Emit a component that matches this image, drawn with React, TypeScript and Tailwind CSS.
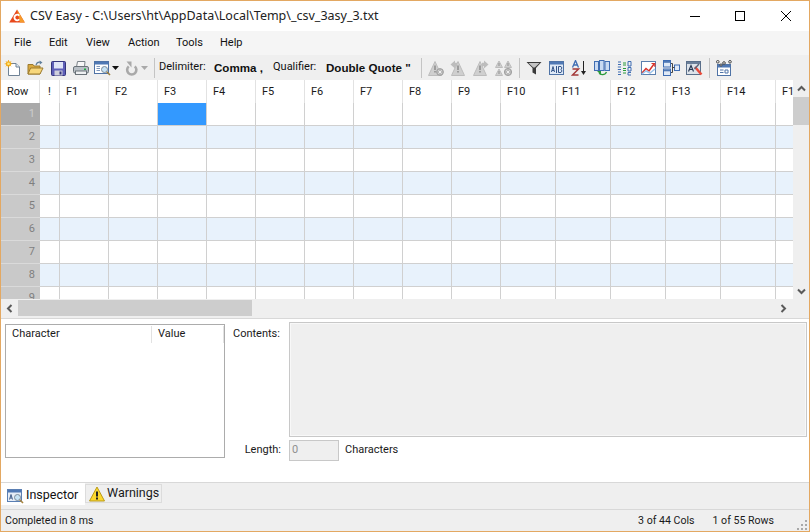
const fieldCols = [
  { name: "F1", w: "w-[49px]" },
  { name: "F2", w: "w-[49px]" },
  { name: "F3", w: "w-[49px]" },
  { name: "F4", w: "w-[49px]" },
  { name: "F5", w: "w-[49px]" },
  { name: "F6", w: "w-[49px]" },
  { name: "F7", w: "w-[49px]" },
  { name: "F8", w: "w-[49px]" },
  { name: "F9", w: "w-[49px]" },
  { name: "F10", w: "w-[55px]" },
  { name: "F11", w: "w-[55px]" },
  { name: "F12", w: "w-[55px]" },
  { name: "F13", w: "w-[55px]" },
  { name: "F14", w: "w-[55px]" },
  { name: "F15", w: "w-[55px]" },
];

const rows = [1, 2, 3, 4, 5, 6, 7, 8, 9];

function Icon({ children, w = 16 }: { children: React.ReactNode; w?: number }) {
  return (
    <svg width={w} height="16" viewBox={`0 0 ${w} 16`} className="shrink-0 block">
      {children}
    </svg>
  );
}

function Logo() {
  return (
    <svg width="16" height="14" viewBox="0 0 16 14" className="block shrink-0">
      <path d="M8 0.5 L15.8 13.5 H0.2 Z" fill="#e8481c" />
      <path d="M8 0.5 L15.8 13.5 H11 Z" fill="#f59a2a" />
      <path d="M10.3 6.6 A2.8 2.8 0 1 0 10.3 10.4" fill="none" stroke="#fff" strokeWidth="1.8" />
    </svg>
  );
}

function NewIcon() {
  return (
    <Icon w={17}>
      <path d="M4.5 3.5 H12 L15.5 7 V15.5 H4.5 Z" fill="#fff" stroke="#6f8296" />
      <path d="M12 3.5 V7 H15.5" fill="#dfe8f0" stroke="#6f8296" />
      <circle cx="4.5" cy="3.8" r="2.6" fill="#f7b81f" />
      <path d="M4.5 0 V7.6 M0.7 3.8 H8.3 M2 1.3 L7 6.3 M7 1.3 L2 6.3" stroke="#f0a010" strokeWidth="0.8" />
      <circle cx="4.5" cy="3.8" r="1.3" fill="#fdeb8a" />
    </Icon>
  );
}

function OpenIcon() {
  return (
    <Icon w={17}>
      <path d="M1 4.5 H6 L7 6 H13 V14 H1 Z" fill="#d9a93f" stroke="#9b7a2e" />
      <path d="M1 14 L3.6 8 H16 L13 14 Z" fill="#f7d77c" stroke="#9b7a2e" />
      <path d="M9 5 C9.6 2.6 11.5 1.8 13.5 2.2" fill="none" stroke="#5f7f9c" strokeWidth="1.1" />
      <path d="M12.6 0.6 L15.5 2.4 L12.8 4.4 Z" fill="#5f7f9c" />
    </Icon>
  );
}

function SaveIcon() {
  return (
    <Icon w={15}>
      <rect x="0.5" y="1.5" width="14" height="14" rx="1" fill="#5e5fb8" stroke="#34357c" />
      <rect x="3" y="2" width="9" height="6.5" fill="#dfe4f7" />
      <rect x="3.5" y="10.5" width="8" height="5" fill="#cfd0dc" />
      <rect x="8.5" y="11.5" width="2" height="3" fill="#34357c" />
    </Icon>
  );
}

function PrintIcon() {
  return (
    <Icon w={16}>
      <path d="M4.5 1.5 H12 L11.5 7 H3.5 Z" fill="#f7f7f7" stroke="#7a8288" />
      <rect x="0.5" y="6.5" width="15" height="6.5" rx="1.5" fill="#b9c0c6" stroke="#6a7278" />
      <rect x="2.5" y="11" width="11" height="3.5" fill="#eef0f2" stroke="#6a7278" />
      <rect x="11" y="8.5" width="2" height="1.5" fill="#1fae3f" />
    </Icon>
  );
}

function ViewIcon() {
  return (
    <Icon w={17}>
      <rect x="0.5" y="1.5" width="14" height="12" fill="#fff" stroke="#4f73a6" />
      <rect x="1" y="2" width="13" height="2.5" fill="#4f78b4" />
      <path d="M2.5 6.5 H6 M2.5 8.5 H6 M2.5 10.5 H6" stroke="#7d96bb" />
      <circle cx="10.5" cy="9.5" r="3" fill="#c7e3f5" stroke="#7d8b98" />
      <path d="M12.7 11.7 L16 15" stroke="#9a7d3e" strokeWidth="1.6" />
    </Icon>
  );
}

function Caret({ color }: { color: string }) {
  return (
    <svg width="7" height="4" viewBox="0 0 7 4" className="block shrink-0" fill={color}>
      <path d="M0 0 H7 L3.5 4 Z" />
    </svg>
  );
}

function UndoIcon() {
  return (
    <Icon w={13}>
      <path d="M4.5 5.4 A4.6 4.6 0 1 0 10.6 5.4" fill="none" stroke="#a9a9a9" strokeWidth="2.6" transform="translate(-0.8 1)" />
      <path d="M1.5 1.5 H6.5 V7.5 Z" fill="#a9a9a9" />
    </Icon>
  );
}

function GrayTriangle({ x = 0, y = 1, w = 13, h = 14 }: { x?: number; y?: number; w?: number; h?: number }) {
  return <path d={`M${x + w / 2} ${y} L${x + w} ${y + h} H${x} Z`} fill="#cfcfcf" stroke="#bcbcbc" strokeLinejoin="round" />;
}

function WarnClearIcon() {
  return (
    <Icon>
      <GrayTriangle x={0.5} y={1.5} />
      <path d="M7 5.5 V10 M7 11 V12.5" stroke="#8f8f8f" strokeWidth="1.6" />
      <circle cx="12" cy="12" r="3.4" fill="#b9b9b9" stroke="#a0a0a0" />
      <path d="M10.5 10.5 L13.5 13.5 M13.5 10.5 L10.5 13.5" stroke="#eee" />
    </Icon>
  );
}

function WarnPrevIcon() {
  return (
    <Icon>
      <GrayTriangle x={1.5} y={1.5} />
      <path d="M8 5.5 V10 M8 11 V12.5" stroke="#8f8f8f" strokeWidth="1.6" />
      <path d="M0.5 4.5 L5 0.5 V2.8 H7 V6.2 H5 V8.5 Z" fill="#bdbdbd" />
    </Icon>
  );
}

function WarnNextIcon() {
  return (
    <Icon>
      <GrayTriangle x={0.5} y={1.5} />
      <path d="M7 5.5 V10 M7 11 V12.5" stroke="#8f8f8f" strokeWidth="1.6" />
      <path d="M15.5 4.5 L11 0.5 V2.8 H9 V6.2 H11 V8.5 Z" fill="#bdbdbd" />
    </Icon>
  );
}

function WarnAllIcon() {
  return (
    <Icon w={18}>
      <GrayTriangle x={0.5} y={1} w={7} h={6.5} />
      <GrayTriangle x={9.5} y={1} w={7} h={6.5} />
      <GrayTriangle x={0.5} y={9} w={7} h={6.5} />
      <path d="M4 3 V6 M13 3 V6 M4 11 V14" stroke="#8f8f8f" />
      <circle cx="13" cy="12" r="3.6" fill="#b9b9b9" stroke="#a0a0a0" />
      <path d="M11.5 10.5 L14.5 13.5 M14.5 10.5 L11.5 13.5" stroke="#eee" />
    </Icon>
  );
}

function FilterIcon() {
  return (
    <Icon>
      <path d="M0.5 2 H15.5 L10 8 V14.5 L6.5 12.5 V8 Z" fill="#3a3a3a" />
      <path d="M2.5 3 H13.5 L8.8 7.5 H7.2 Z" fill="#c4c4c4" />
    </Icon>
  );
}

function RenameIcon() {
  return (
    <Icon w={15}>
      <rect x="0.5" y="1.5" width="14" height="13" fill="#dfe9f6" stroke="#4f73a6" />
      <rect x="1" y="2" width="13" height="2.5" fill="#4f78b4" />
      <path d="M2.5 12 L4 6.5 L5.5 12 M3 10.5 H5" fill="none" stroke="#34558a" />
      <path d="M7.5 6 V13" stroke="#34558a" />
      <path d="M9.5 6.5 H12 L13 8 L12 9.3 L13 11 L12 12.5 H9.5 Z" fill="none" stroke="#34558a" />
    </Icon>
  );
}

function SortIcon() {
  return (
    <Icon>
      <path d="M1.5 7.5 L4.5 0.5 L7.5 7.5 M2.8 5 H6.2" fill="none" stroke="#3f6db3" strokeWidth="1.3" />
      <path d="M1.5 9 H7.5 L1.5 15 H7.5" fill="none" stroke="#a33a3a" strokeWidth="1.5" />
      <path d="M12.5 1 V12" stroke="#222" />
      <path d="M10 11 H15 L12.5 15 Z" fill="#222" />
    </Icon>
  );
}

function ColumnsIcon() {
  return (
    <Icon>
      <rect x="0.5" y="1.5" width="4" height="9" fill="#c9daf2" stroke="#3f6db3" />
      <rect x="5.5" y="0.5" width="4.5" height="10" fill="#c9daf2" stroke="#3f6db3" />
      <rect x="11" y="1.5" width="4.5" height="9" fill="#c9daf2" stroke="#3f6db3" />
      <path d="M5 12.5 C6 15.5 11 15.5 12.5 12" fill="none" stroke="#2a9a3a" strokeWidth="1.3" />
      <path d="M3 11 H7 V14.5 Z" fill="#2a9a3a" />
    </Icon>
  );
}

function NumberIcon() {
  return (
    <Icon w={15}>
      <path d="M1 2 H4 M1 4.5 H4 M0.8 7 H4 M0.8 9.5 H4 M1 12 H4 M1 14.5 H4" stroke="#3f6db3" />
      <path d="M6 3 H9 M6 5 H9 M6 8.5 H9 M6 10.5 H9 M6 13 H9" stroke="#2a9a3a" />
      <path d="M11 1.5 H14 V6 H11 Z M11 7.5 H14 V11 H11 Z M14 12.5 H11 V15 H14" fill="none" stroke="#3f6db3" />
    </Icon>
  );
}

function ChartIcon() {
  return (
    <Icon w={15}>
      <rect x="0.5" y="1.5" width="14" height="13" fill="#fff" stroke="#5b7fae" />
      <path d="M1 13 L5 8.5 L8 11 L13 4" fill="none" stroke="#d9342b" strokeWidth="1.5" />
      <path d="M10.5 3.5 H13.8 V6.8" fill="none" stroke="#d9342b" strokeWidth="1.2" />
      <path d="M1 14 L5 11 L9 13 L14 9" fill="none" stroke="#9cc3ea" strokeWidth="1.5" />
    </Icon>
  );
}

function SplitIcon() {
  return (
    <Icon w={17}>
      <rect x="0.5" y="0.5" width="7" height="6.5" fill="#dfe9f6" stroke="#3f6db3" />
      <rect x="1" y="1" width="6" height="1.8" fill="#4f78b4" />
      <rect x="0.5" y="9" width="7" height="6.5" fill="#dfe9f6" stroke="#3f6db3" />
      <rect x="1" y="9.5" width="6" height="1.8" fill="#4f78b4" />
      <rect x="11.5" y="5" width="5" height="5.5" fill="#dfe9f6" stroke="#3f6db3" />
      <path d="M8 3.5 H9.5 V12.5 H8 M9.5 7.5 H11.5" fill="none" stroke="#444" />
    </Icon>
  );
}

function ClearIcon() {
  return (
    <Icon w={17}>
      <rect x="0.5" y="1.5" width="14" height="13" fill="#dde3ea" stroke="#5a6f8a" />
      <rect x="1" y="2" width="13" height="2" fill="#6b7f99" />
      <path d="M2.5 11.5 L5 5.5 L7.5 11.5 M3.5 9.5 H6.5" fill="none" stroke="#2a3a55" strokeWidth="1.2" />
      <path d="M9 7 L15.5 14.5" stroke="#ea4a3a" strokeWidth="2.4" />
      <path d="M13 4 L8.5 9" stroke="#59667a" strokeWidth="1.4" />
    </Icon>
  );
}

function SettingsIcon() {
  return (
    <Icon>
      <rect x="1.5" y="4.5" width="13" height="11" fill="#fff" stroke="#4f73a6" />
      <rect x="2" y="5" width="12" height="2.5" fill="#4f78b4" />
      <circle cx="1.8" cy="1.8" r="1.3" fill="#fff" stroke="#444" />
      <circle cx="8" cy="3" r="1.3" fill="#fff" stroke="#444" />
      <circle cx="14" cy="1.8" r="1.3" fill="#fff" stroke="#444" />
      <circle cx="5" cy="5" r="1.1" fill="#fff" stroke="#444" />
      <path d="M4 10 H7.5 M4 12.5 H7.5 M9 10 H12 V13 H9 Z" stroke="#4f73a6" fill="none" />
    </Icon>
  );
}

function InspectorIcon() {
  return (
    <Icon w={17}>
      <rect x="0.5" y="1.5" width="14" height="12" fill="#e6edf7" stroke="#5a7fb3" />
      <rect x="1" y="2" width="13" height="2.5" fill="#4f78b4" />
      <path d="M2.5 11.5 L4 6.5 L5.5 11.5 M3 10 H5" fill="none" stroke="#445f8a" />
      <circle cx="10.5" cy="9.5" r="3" fill="#c7e3f5" stroke="#7d8b98" />
      <path d="M12.7 11.7 L16 15" stroke="#a8843e" strokeWidth="1.6" />
    </Icon>
  );
}

function WarningIcon() {
  return (
    <Icon>
      <path d="M8 1 L15.5 15 H0.5 Z" fill="#fcd82e" stroke="#b99a1a" strokeLinejoin="round" />
      <path d="M8 5.5 V10.5 M8 11.5 V13.5" stroke="#222" strokeWidth="2" />
    </Icon>
  );
}

function Sep({ className }: { className: string }) {
  return <div className={`h-[20px] w-[1px] shrink-0 bg-[#c4c4c4] ${className}`} />;
}

function TitleBar() {
  return (
    <div className="flex h-[30px] shrink-0 items-center bg-white">
      <div className="ml-[8px] mr-[5px]">
        <Logo />
      </div>
      <span className="font-['Noto_Sans'] text-[12.5px] text-[#222]">
        CSV Easy - C:\Users\ht\AppData\Local\Temp\_csv_3asy_3.txt
      </span>
      <div className="ml-auto flex h-full">
        <div className="flex w-[44px] items-center justify-center">
          <div className="h-[1px] w-[10px] bg-black" />
        </div>
        <div className="flex w-[46px] items-center justify-center">
          <div className="h-[10px] w-[10px] border border-black" />
        </div>
        <div className="flex w-[46px] items-center justify-center">
          <svg width="10" height="10" viewBox="0 0 10 10" className="block">
            <path d="M0 0 L10 10 M10 0 L0 10" stroke="#000" strokeWidth="1" />
          </svg>
        </div>
      </div>
    </div>
  );
}

function MenuBar() {
  return (
    <div className="flex h-[24px] shrink-0 items-center bg-[#f5f5f5] pl-[13px] pt-[1px] text-[#111]">
      <span className="w-[35px]">File</span>
      <span className="w-[37px]">Edit</span>
      <span className="w-[42px]">View</span>
      <span className="w-[48px]">Action</span>
      <span className="w-[44px]">Tools</span>
      <span>Help</span>
    </div>
  );
}

function ToolBar() {
  return (
    <div className="flex h-[25px] shrink-0 items-center bg-[#efefef] pl-[3px] text-[#111]">
      <NewIcon />
      <div className="ml-[6px]"><OpenIcon /></div>
      <div className="ml-[7px]"><SaveIcon /></div>
      <div className="ml-[7px]"><PrintIcon /></div>
      <div className="ml-[5px]"><ViewIcon /></div>
      <div className="ml-[1px]"><Caret color="#111" /></div>
      <div className="ml-[6px]"><UndoIcon /></div>
      <div className="ml-[3px]"><Caret color="#a9a9a9" /></div>
      <Sep className="ml-[6px]" />
      <span className="ml-[4px] w-[55px] shrink-0">Delimiter:</span>
      <span className="w-[59px] shrink-0 font-['Liberation_Sans'] text-[11.6px] font-bold">Comma ,</span>
      <span className="w-[53px] shrink-0">Qualifier:</span>
      <span className="w-[95px] shrink-0 font-['Liberation_Sans'] text-[11.6px] font-bold">Double Quote "</span>
      <Sep className="" />
      <div className="ml-[6px]"><WarnClearIcon /></div>
      <div className="ml-[6px]"><WarnPrevIcon /></div>
      <div className="ml-[7px]"><WarnNextIcon /></div>
      <div className="ml-[6px]"><WarnAllIcon /></div>
      <Sep className="ml-[6px]" />
      <div className="ml-[6px]"><FilterIcon /></div>
      <div className="ml-[7px]"><RenameIcon /></div>
      <div className="ml-[7px]"><SortIcon /></div>
      <div className="ml-[7px]"><ColumnsIcon /></div>
      <div className="ml-[7px]"><NumberIcon /></div>
      <div className="ml-[9px]"><ChartIcon /></div>
      <div className="ml-[7px]"><SplitIcon /></div>
      <div className="ml-[6px]"><ClearIcon /></div>
      <Sep className="ml-[6px]" />
      <div className="ml-[6px]"><SettingsIcon /></div>
    </div>
  );
}

function DataGrid() {
  return (
    <div className="h-[219px] w-[792px] shrink-0 overflow-hidden bg-white">
      <div className="flex h-[23px]">
        <div className="flex w-[39px] shrink-0 items-center border-r border-[#e2e2e2] pl-[6px] pt-[1px]">Row</div>
        <div className="flex w-[20px] shrink-0 items-center justify-center border-r border-[#e2e2e2] pt-[1px]">!</div>
        {fieldCols.map((c) => (
          <div key={c.name} className={`flex shrink-0 items-center border-r border-[#e2e2e2] pl-[6px] pt-[1px] ${c.w}`}>
            {c.name}
          </div>
        ))}
      </div>
      {rows.map((r) => (
        <div key={r} className={`flex h-[23px] ${r % 2 === 0 ? "bg-[#e8f2fc]" : "bg-white"}`}>
          <div
            className={`flex w-[39px] shrink-0 items-center justify-end border-b border-[#dadada] pr-[5px] ${
              r === 1 ? "bg-[#a9a9a9] text-[#cdcdcd]" : "bg-[#c9c9c9] text-[#7f7f7f]"
            }`}
          >
            {r}
          </div>
          <div className="w-[20px] shrink-0 border-r border-b border-[#d0d0d0]" />
          {fieldCols.map((c) => (
            <div
              key={c.name}
              className={`shrink-0 border-r border-b border-[#d0d0d0] ${c.w} ${
                r === 1 && c.name === "F3" ? "bg-[#3399ff]" : ""
              }`}
            />
          ))}
        </div>
      ))}
    </div>
  );
}

function Chevron({ d }: { d: string }) {
  return (
    <svg width="9" height="9" viewBox="0 0 9 9" className="block">
      <path d={d} fill="none" stroke="#5a5a5a" strokeWidth="2" />
    </svg>
  );
}

function VScrollBar() {
  return (
    <div className="flex h-[220px] w-[16px] shrink-0 flex-col bg-[#efefef]">
      <div className="flex h-[17px] items-center justify-center">
        <Chevron d="M1 6.5 L4.5 3 L8 6.5" />
      </div>
      <div className="h-[28px] bg-[#cdcdcd]" />
      <div className="mt-auto flex h-[17px] items-center justify-center">
        <Chevron d="M1 2.5 L4.5 6 L8 2.5" />
      </div>
    </div>
  );
}

function HScrollBar() {
  return (
    <div className="flex h-[18px] shrink-0 bg-[#efefef] pb-[2px]">
      <div className="flex w-[17px] items-center justify-center">
        <Chevron d="M6.5 1 L3 4.5 L6.5 8" />
      </div>
      <div className="w-[234px] bg-[#cdcdcd]" />
      <div className="ml-auto mr-[17px] flex w-[17px] items-center justify-center">
        <Chevron d="M2.5 1 L6 4.5 L2.5 8" />
      </div>
    </div>
  );
}

function InspectorPanel() {
  return (
    <div className="box-content flex h-[163px] shrink-0 items-start border-t border-[#d8d8d8] bg-white">
      <div className="ml-[4px] mt-[5px] h-[134px] w-[220px] shrink-0 border border-[#acacac]">
        <div className="flex h-[18px] items-center pt-[1px]">
          <div className="flex h-full w-[146px] items-center border-r border-[#e2e2e2] pl-[6px]">Character</div>
          <div className="flex h-full flex-1 items-center border-r border-[#e2e2e2] pl-[6px]">Value</div>
        </div>
      </div>
      <div className="ml-[8px] mt-[3px] flex w-[574px] flex-col">
        <div className="flex">
          <span className="mt-[4px] w-[56px] shrink-0">Contents:</span>
          <div className="h-[115px] w-[518px] border border-[#c8c8c8] bg-[#efefef] shadow-[inset_0_0_0_1px_#f8f8f8]" />
        </div>
        <div className="mt-[3px] flex h-[21px] items-center">
          <span className="w-[48px] shrink-0 text-right">Length:</span>
          <span className="w-[8px] shrink-0" />
          <div className="flex h-full w-[50px] items-center border border-[#c8c8c8] bg-[#efefef] pl-[2px] text-[#8f8f8f]">0</div>
          <span className="ml-[6px]">Characters</span>
        </div>
      </div>
    </div>
  );
}

function TabStrip() {
  return (
    <div className="box-content flex h-[26px] shrink-0 items-start border-y border-[#d8d8d8] bg-[#efefef]">
      <div className="flex h-[22px] w-[84px] items-center bg-white pl-[6px] pt-[3px] text-[12.5px] text-[#111]">
        <InspectorIcon />
        <span className="ml-[2px]">Inspector</span>
      </div>
      <div className="mt-[1px] flex h-[19px] w-[77px] items-center border border-[#dcdcdc] bg-[#efefef] pl-[3px] text-[12.5px]">
        <WarningIcon />
        <span className="ml-[2px]">Warnings</span>
      </div>
    </div>
  );
}

function StatusBar() {
  return (
    <div className="flex h-[21px] shrink-0 items-center bg-[#efefef] pl-[4px] pr-[2px] text-[10.6px]">
      <span>Completed in 8 ms</span>
      <span className="ml-auto">3 of 44 Cols</span>
      <span className="ml-[18px]">1 of 55 Rows</span>
      <div className="mb-[1px] ml-[23px] grid h-[10px] w-[10px] grid-cols-3 gap-[2px] self-end">
        <i />
        <i />
        <i className="bg-[#a8a8a8]" />
        <i />
        <i className="bg-[#a8a8a8]" />
        <i className="bg-[#a8a8a8]" />
        <i className="bg-[#a8a8a8]" />
        <i className="bg-[#a8a8a8]" />
        <i className="bg-[#a8a8a8]" />
      </div>
    </div>
  );
}

export default function App() {
  return (
    <div className="flex h-[532px] w-[810px] flex-col overflow-hidden border border-[#e3a862] bg-white font-['Roboto',sans-serif] text-[11px] text-[#1a1a1a]">
      <TitleBar />
      <MenuBar />
      <ToolBar />
      <div className="flex shrink-0 bg-[#efefef]">
        <DataGrid />
        <VScrollBar />
      </div>
      <HScrollBar />
      <InspectorPanel />
      <TabStrip />
      <StatusBar />
    </div>
  );
}
